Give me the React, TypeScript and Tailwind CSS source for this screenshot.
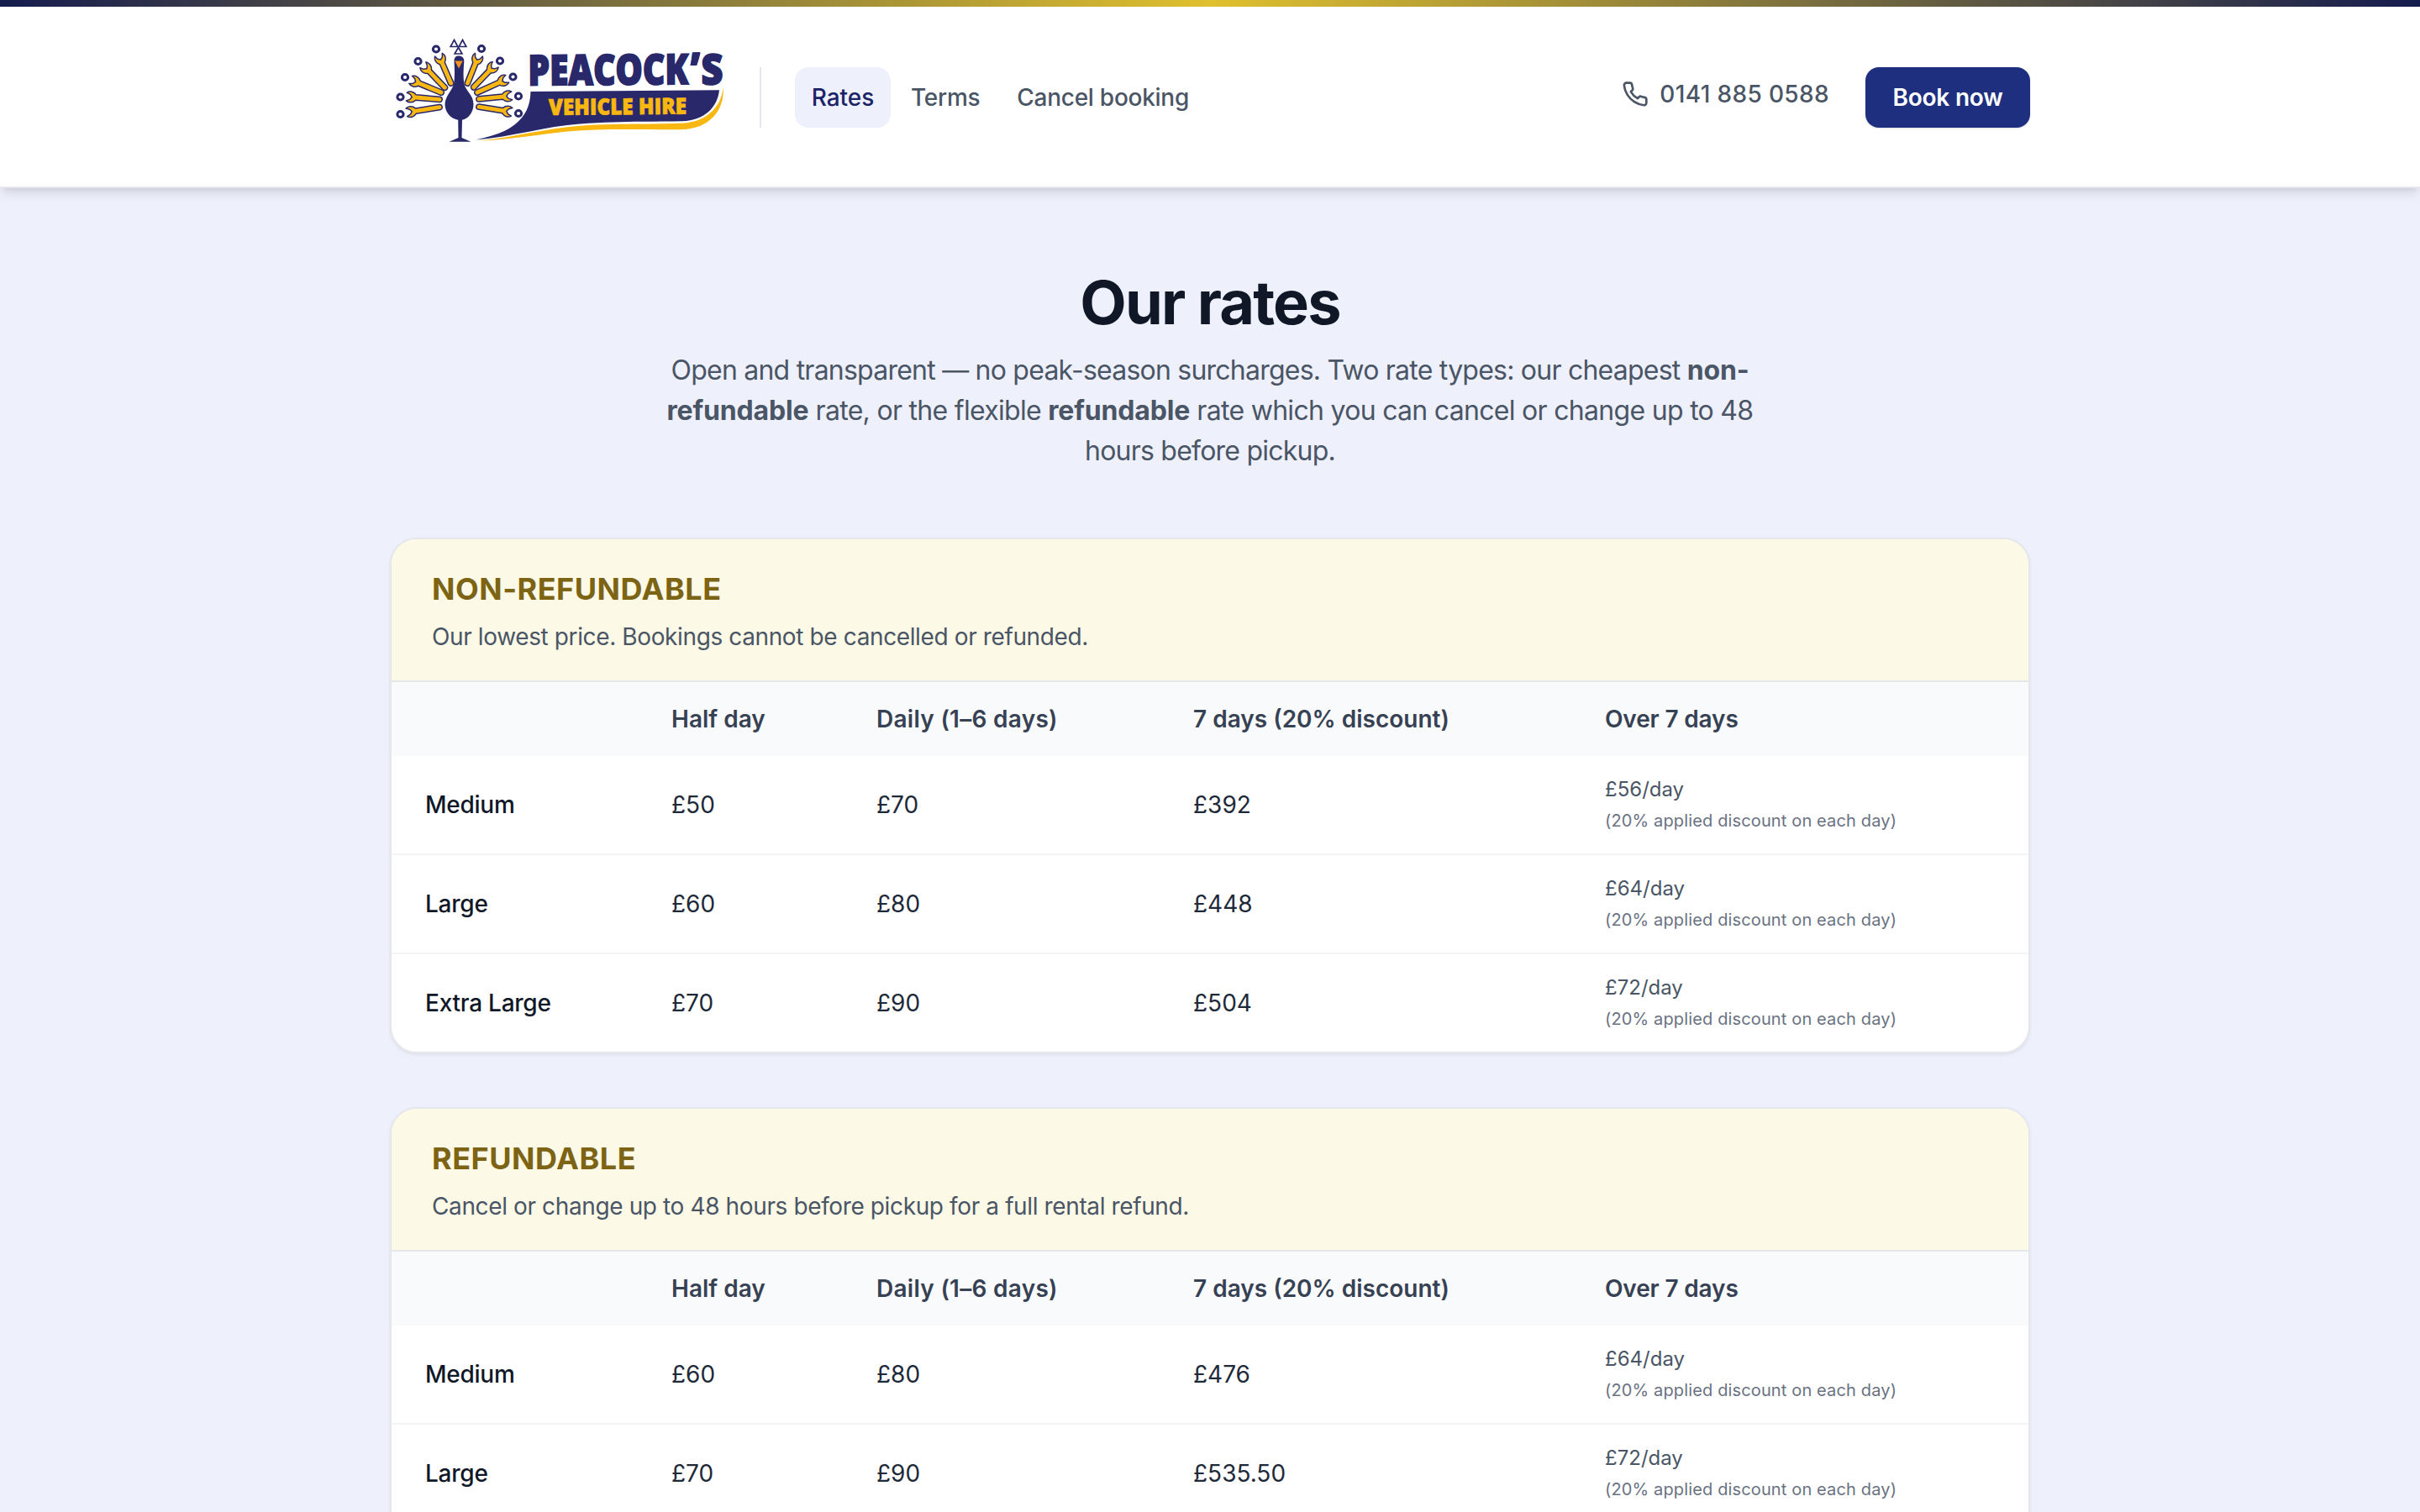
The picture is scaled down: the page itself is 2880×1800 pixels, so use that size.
import React from "react";

const INK = "#28286b";
const GOLD = "#f9b712";

type Feather = { nx: number; ny: number; hx: number; hy: number; tx: number; ty: number };

// nut centre, spanner head centre, handle end
const feathers: Feather[] = [
  { nx: 26.5, ny: 106, hx: 39, hy: 103, tx: 74, ty: 97.5 },
  { nx: 26.5, ny: 85.5, hx: 39, hy: 85.5, tx: 74, ty: 88.5 },
  { nx: 32, ny: 62, hx: 43.5, hy: 67, tx: 76, ty: 80.5 },
  { nx: 47.5, ny: 43, hx: 57, hy: 51, tx: 80, ty: 75 },
  { nx: 69, ny: 28.5, hx: 74, hy: 40, tx: 87, ty: 70 },
  { nx: 123, ny: 28, hx: 118, hy: 40, tx: 106, ty: 70 },
  { nx: 145, ny: 42.5, hx: 136, hy: 50.5, tx: 113, ty: 74.5 },
  { nx: 160.5, ny: 61.5, hx: 149, hy: 66, tx: 117, ty: 80.5 },
  { nx: 167, ny: 84.5, hx: 154, hy: 84.5, tx: 119, ty: 88 },
  { nx: 167, ny: 105, hx: 154, hy: 102.5, tx: 119, ty: 97 },
];

function Spanner({ f }: { f: Feather }) {
  const dx = f.tx - f.hx;
  const dy = f.ty - f.hy;
  const len = Math.hypot(dx, dy);
  const angle = (Math.atan2(dy, dx) * 180) / Math.PI;
  return (
    <>
      <g transform={`translate(${f.hx} ${f.hy}) rotate(${angle})`}>
        <path
          d={`M-5.2 -4.8 C-2 -7.4 3 -6.8 6 -3.2 L${len - 1} -3.200 a3.2 3.2 0 0 1 0 6.4 L6 3.2 C3 6.8 -2 7.4 -5.2 4.8 L-1 3 L1.2 0 L-1 -3 Z`}
          fill={GOLD}
          stroke={INK}
          strokeWidth="1.5"
          strokeLinejoin="round"
        />
      </g>
      <circle cx={f.nx} cy={f.ny} r="3.6" fill="#fff" stroke={INK} strokeWidth="3" />
    </>
  );
}

function Logo() {
  return (
    <svg className="block h-40 w-[430px]" viewBox="0 0 430 160" aria-label="Peacock's Vehicle Hire">
      {feathers.map((f, i) => (
        <Spanner key={i} f={f} />
      ))}
      <g fill="#fff" stroke={INK} strokeWidth="1.7">
        <path d="M90.5 17.500 L94.800 25.500 H86.200 Z" />
        <path d="M100.500 17.500 L104.800 25.500 H96.200 Z" />
        <path d="M95.500 26.500 L99.900 34 H91.100 Z" />
      </g>
      <path
        d="M95.700 36.500 C100 36.500 102.500 39 102.300 43 C101.500 53 101 62 102.500 70 C104 78 113.500 83 113.500 94 C113.500 104 107 111.500 100 112.800 L99.500 134 L110.500 138.800 H84.500 L95.500 134 L95.200 112.800 C87 111.500 79.500 104 79.500 94 C80 84 88 78 90 70 C91.500 62 91 52 90.500 43 C90.500 39 92 36.500 95.700 36.500 Z"
        fill={INK}
      />
      <path d="M91.300 42.500 H100.800 L96 51.500 Z" fill="#f29222" />
      <path
        d="M181.500 79 L406 77.300 C404 98 388 113.500 362 114.300 C330 115 290 114 240 117.500 C200 120 160 133 116 136.500 C140 131 152 126.500 163 118 C175 108 181 97 181.500 79 Z"
        fill={INK}
      />
      <path
        d="M410.500 74 C413 98 397 124 360 124.300 C320 124.500 270 122.500 225 126.500 C190 130 160 136 119 137.800 C160 134 200 122.500 240 119.800 C290 116.500 330 118.500 365 116.500 C393 114 409 95 410.500 74 Z"
        fill={GOLD}
      />
      <g
        fill={INK}
        stroke={INK}
        strokeWidth="1.8"
        fontFamily="Open Sans"
        fontWeight="800"
        fontSize="50"
        transform="rotate(-0.4 180 72)"
      >
        <text x="178.500" y="71.500" textLength="191" lengthAdjust="spacingAndGlyphs">
          PEACOCK
        </text>
        <text x="371.200" y="71" fontSize="52" strokeWidth="1" textLength="12.500" lengthAdjust="spacingAndGlyphs">
          ’
        </text>
        <text x="384.500" y="72" textLength="26" lengthAdjust="spacingAndGlyphs">
          S
        </text>
      </g>
      <text
        x="203"
        y="107"
        fill={GOLD}
        stroke={GOLD}
        strokeWidth="0.8"
        fontFamily="Open Sans"
        fontWeight="800"
        fontSize="26.500"
        textLength="164"
        lengthAdjust="spacingAndGlyphs"
        transform="rotate(-0.500 203 107)"
      >
        VEHICLE HIRE
      </text>
    </svg>
  );
}

function PhoneIcon() {
  return (
    <svg className="size-8" viewBox="0 0 24 24" fill="none" stroke="currentColor" strokeWidth="2" strokeLinecap="round" strokeLinejoin="round">
      <path d="M22 16.92v3a2 2 0 0 1-2.18 2 19.79 19.79 0 0 1-8.63-3.07 19.5 19.5 0 0 1-6-6 19.79 19.79 0 0 1-3.07-8.67A2 2 0 0 1 4.11 2h3a2 2 0 0 1 2 1.72 12.84 12.84 0 0 0 .7 2.81 2 2 0 0 1-.45 2.11L8.09 9.91a16 16 0 0 0 6 6l1.27-1.27a2 2 0 0 1 2.11-.45 12.84 12.84 0 0 0 2.81.7A2 2 0 0 1 22 16.92z" />
    </svg>
  );
}

function Header() {
  return (
    <header className="h-[224px] border-b-2 border-gray-200 bg-white shadow-[0_8px_12px_-2px_rgba(0,0,0,0.1),0_4px_8px_-4px_rgba(0,0,0,0.1)]">
      <div className="h-2 bg-[linear-gradient(to_right,#141c4e,#dfc02e,#141c4e)]" />
      <div className="mx-auto flex w-[1952px] items-start pt-[22px]">
        <div className="-ml-[14px] w-[454px]">
          <Logo />
        </div>
        <nav className="mt-[50px] flex h-[72px] items-center gap-1 border-l-2 border-gray-200 pl-10 text-[28px] leading-10 font-medium tracking-[-0.27px] text-gray-600">
          <a className="flex h-[72px] w-[114px] items-center justify-center rounded-2xl bg-[#eef0fc] tracking-normal text-[#1a2368]">Rates</a>
          <a className="px-5">Terms</a>
          <a className="px-5">Cancel booking</a>
        </nav>
        <div className="mt-[50px] ml-auto flex">
          <a className="mr-[43px] flex h-16 items-center gap-[13px] text-[28px] font-medium tracking-[0.36px] text-gray-600">
            <PhoneIcon />
            <span>0141 885 0588</span>
          </a>
          <a className="flex h-[72px] w-[196px] items-center justify-center rounded-2xl bg-[#1e2f80] text-[28px] font-semibold tracking-[-0.2px] text-white shadow-sm">
            Book now
          </a>
        </div>
      </div>
    </header>
  );
}

type Row = { name: string; half: string; daily: string; week: string; over: string };

const tariffs: { title: string; note: string; rows: Row[] }[] = [
  {
    title: "NON-REFUNDABLE",
    note: "Our lowest price. Bookings cannot be cancelled or refunded.",
    rows: [
      { name: "Medium", half: "£50", daily: "£70", week: "£392", over: "£56/day" },
      { name: "Large", half: "£60", daily: "£80", week: "£448", over: "£64/day" },
      { name: "Extra Large", half: "£70", daily: "£90", week: "£504", over: "£72/day" },
    ],
  },
  {
    title: "REFUNDABLE",
    note: "Cancel or change up to 48 hours before pickup for a full rental refund.",
    rows: [
      { name: "Medium", half: "£60", daily: "£80", week: "£476", over: "£64/day" },
      { name: "Large", half: "£70", daily: "£90", week: "£535.50", over: "£72/day" },
    ],
  },
];

function RateCard({ title, note, rows }: (typeof tariffs)[number]) {
  return (
    <section className="min-h-[614px] overflow-hidden rounded-[32px] border-2 border-gray-200 bg-white shadow-[0_2px_4px_rgba(0,0,0,0.07)]">
      <div className="h-[170px] border-b-2 border-gray-200 bg-[#fcf9e6] px-12 pt-[31px]">
        <h2 className="text-[36px] leading-[56px] font-bold tracking-[0.52px] text-[#7d6414]">{title}</h2>
        <p className="mt-[9px] text-[28px] leading-10 tracking-[-0.38px] text-gray-600">{note}</p>
      </div>
      <table className="w-full table-fixed border-separate border-spacing-0 text-left text-[28px] leading-10">
        <colgroup>
          <col className="w-[293px]" />
          <col className="w-[244px]" />
          <col className="w-[377px]" />
          <col className="w-[490px]" />
          <col />
        </colgroup>
        <thead>
          <tr className="h-[88px] bg-gray-50 text-gray-700">
            <th />
            <th className="px-10 font-semibold">Half day</th>
            <th className="px-10 font-semibold tracking-[0.28px]">Daily (1–6 days)</th>
            <th className="px-10 font-semibold">7 days (20% discount)</th>
            <th className="px-10 font-semibold tracking-[-0.15px]">Over 7 days</th>
          </tr>
        </thead>
        <tbody className="[&>tr:nth-child(3)>td]:border-b-0">
          {rows.map((r) => (
            <tr key={r.name} className="h-[118px] text-gray-800 nth-3:h-[116px] [&>td]:border-b-2 [&>td]:border-gray-100">
              <td className="px-10 font-medium tracking-[-0.25px] text-gray-900">{r.name}</td>
              <td className="px-10">{r.half}</td>
              <td className="px-10">{r.daily}</td>
              <td className="px-10">{r.week}</td>
              <td className="px-10">
                <div className="text-[24px] leading-[38px] text-gray-600">{r.over}</div>
                <div className="text-[20px] leading-9 tracking-[0.14px] text-gray-500">(20% applied discount on each day)</div>
              </td>
            </tr>
          ))}
        </tbody>
      </table>
    </section>
  );
}

export default function App() {
  return (
    <div className="h-[1800px] overflow-hidden bg-[#eef0fc] font-[Inter,sans-serif]">
      <Header />
      <main className="mx-auto w-[1952px] pt-24">
        <h1 className="text-center text-[72px] leading-[80px] font-bold tracking-[-0.025em] text-gray-900">Our rates</h1>
        <p className="mx-auto mt-[17px] w-[1344px] text-center text-[32px] leading-[48px] tracking-[-0.77px] whitespace-nowrap text-gray-600">
          Open and transparent — no peak-season surcharges. Two rate types: our cheapest{" "}
          <strong className="tracking-[-0.18px]">non-</strong>
          <br />
          <span className="tracking-[-0.7px]">
            <strong className="tracking-[-0.18px]">refundable</strong> rate, or the flexible{" "}
            <strong className="tracking-[-0.18px]">refundable</strong> rate which you can cancel or change up to 48
          </span>
          <br />
          hours before pickup.
        </p>
        <div className="mt-[79px] flex flex-col gap-16">
          {tariffs.map((t) => (
            <RateCard key={t.title} {...t} />
          ))}
        </div>
      </main>
    </div>
  );
}
